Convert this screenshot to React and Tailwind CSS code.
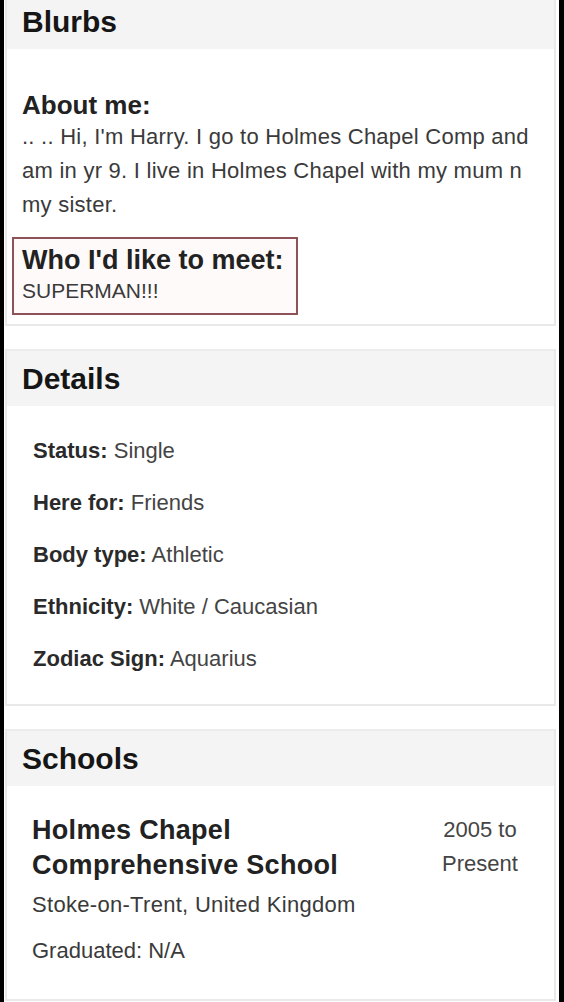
import React from "react";

const details = [
    ["Status", "Single"],
    ["Here for", "Friends"],
    ["Body type", "Athletic"],
    ["Ethnicity", "White / Caucasian"],
    ["Zodiac Sign", "Aquarius"],
];

const Card = ({ title, top, children }) => (
    <div className="border-x-2 border-b-2 border-[#e9e9e9] bg-white">
        <div
            className={
                top
                    ? "h-[49px] bg-[#f4f4f4] px-[15px] pt-[7px]"
                    : "h-[57px] bg-[#f4f4f4] px-[15px] flex items-center border-t-2 border-[#ececec]"
            }
        >
            <h2 className="text-[30px] leading-[30px] font-bold text-[#161616]">{title}</h2>
        </div>
        {children}
    </div>
);

export default function App() {
    return (
        <div className="min-h-screen bg-black pl-[4px] pr-[5px] font-['Liberation_Sans',Arial,sans-serif]">
            <div className="bg-white min-h-[1002px] pl-[1px] pr-[3px] flex flex-col gap-[23px]">
                <Card title="Blurbs" top>
                    <div className="pt-[41px] pb-[9px] pl-[5px]">
                        <div className="px-[10px]">
                            <h3 className="text-[26px] leading-[30px] font-bold text-[#222]">About me:</h3>
                            <p className="text-[22px] leading-[34px] tracking-[0.25px] text-[#3a3a3a] pr-[14px]">
                                .. .. Hi, I'm Harry. I go to Holmes Chapel Comp and am in yr 9. I live in Holmes Chapel with my mum n my sister.
                            </p>
                        </div>
                        <div className="mt-[15px] w-[286px] border-2 border-[#8f5257] bg-[#fffafa] pl-[8px] pt-[5px] pb-[7px]">
                            <h3 className="text-[27px] leading-[32px] font-bold text-[#222]">Who I'd like to meet:</h3>
                            <p className="text-[21px] leading-[30px] text-[#3a3a3a]">SUPERMAN!!!</p>
                        </div>
                    </div>
                </Card>

                <Card title="Details">
                    <div className="pt-[19px] pb-[19px] pl-[26px]">
                        {details.map(([label, value]) => (
                            <div key={label} className="text-[22px] leading-[52px]">
                                <span className="font-bold text-[#2a2a2a]">{label}:</span>{" "}
                                <span className="text-[#444]">{value}</span>
                            </div>
                        ))}
                    </div>
                </Card>

                <Card title="Schools">
                    <div className="pt-[27px] pb-[33px] pl-[25px] pr-[24px]">
                        <div className="flex justify-between">
                            <div className="flex-1">
                                <h3 className="text-[27px] leading-[35px] tracking-[0.3px] font-bold text-[#222]">
                                    Holmes Chapel
                                    <br />
                                    Comprehensive School
                                </h3>
                                <p className="mt-[7px] text-[22px] leading-[30px] tracking-[0.3px] text-[#3a3a3a]">
                                    Stoke-on-Trent, United Kingdom
                                </p>
                            </div>
                            <div className="w-[100px] text-center text-[22px] leading-[34px] text-[#444]">
                                2005 to
                                <br />
                                Present
                            </div>
                        </div>
                        <p className="mt-[16px] text-[22px] leading-[30px] text-[#3a3a3a]">Graduated: N/A</p>
                    </div>
                </Card>
            </div>
        </div>
    );
}
